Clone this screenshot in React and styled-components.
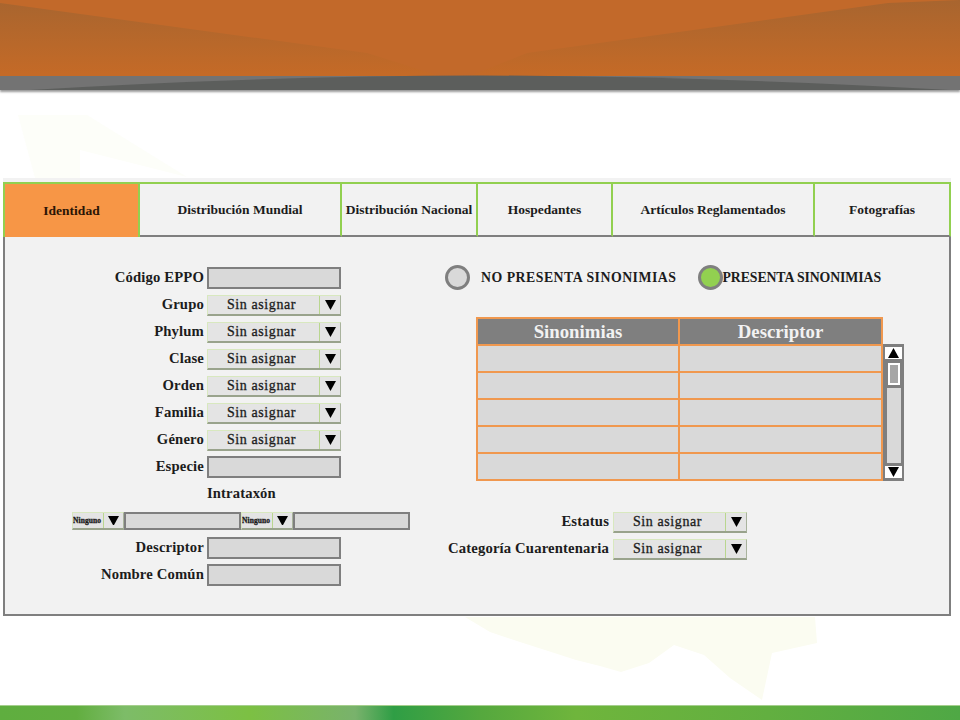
import React from "react";
import styled, { createGlobalStyle } from "styled-components";

const Global = createGlobalStyle`
  html, body { margin: 0; padding: 0; background: #fff; }
  body { font-family: "Liberation Serif", "Times New Roman", serif; color: #1c1c1c; }
`;

const Page = styled.div`
  position: relative;
  width: 960px;
  height: 720px;
  overflow: hidden;
  display: flex;
  flex-direction: column;
`;

const Watermark = styled.svg`
  position: absolute;
  inset: 0;
  width: 960px;
  height: 720px;
`;

const Header = styled.header`
  position: relative;
  height: 90px;
  flex: none;
  box-shadow: 0 2px 2px rgba(70, 70, 70, 0.55);
`;

const HeaderArt = styled.svg`
  display: block;
  width: 960px;
  height: 90px;
`;

const Panel = styled.section`
  position: relative;
  margin: 92px 0 0 3px;
  width: 948px;
  height: 434px;
  box-sizing: border-box;
  flex: none;
  background: #f2f2f2;
  border: solid #7f7f7f;
  border-width: 0 2px 2px 2px;
  box-shadow: 0 -4px 0 #f2f2f2;
`;

const Tabs = styled.nav`
  display: flex;
  height: 55px;
  margin: 0 -2px;
  box-sizing: border-box;
`;

const Tab = styled.div`
  box-sizing: border-box;
  width: ${(p) => p.$w}px;
  flex: none;
  display: flex;
  align-items: center;
  justify-content: center;
  font-size: 13.5px;
  font-weight: 700;
  white-space: nowrap;
  color: ${(p) => (p.$active ? "#2b1505" : "#1c1c1c")};
  background: ${(p) => (p.$active ? "#f79646" : "#f2f2f2")};
  border-top: 2px solid #92d050;
  border-right: 2px solid #92d050;
  border-left: ${(p) => (p.$first ? "2px solid #92d050" : "0")};
  border-bottom: ${(p) => (p.$active ? "0" : "2px solid #7f7f7f")};
`;

const Body = styled.div`
  display: flex;
  padding: 28px 0 0 55px;
`;

const LeftColumn = styled.div`
  width: 350px;
  flex: none;
  padding-top: 2px;
  display: flex;
  flex-direction: column;
  gap: 5px;
`;

const FieldRow = styled.div`
  display: grid;
  grid-template-columns: ${(p) => p.$label || 144}px 134px;
  column-gap: ${(p) => p.$gap || 3}px;
  height: 22px;
  align-items: center;

  > :last-child {
    align-self: end;
  }
`;

const Label = styled.label`
  text-align: right;
  font-size: 14.7px;
  font-weight: 700;
  white-space: nowrap;
  letter-spacing: 0.15px;
  position: relative;
  top: -1px;
`;

const TextBox = styled.div`
  box-sizing: border-box;
  width: ${(p) => p.$w || 134}px;
  height: ${(p) => p.$h || 22}px;
  background: #d9d9d9;
  border: 2px solid #7f7f7f;
  flex: none;
`;

const SelectBox = styled.div`
  box-sizing: border-box;
  width: ${(p) => p.$w || 134}px;
  height: ${(p) => p.$h || 21}px;
  flex: none;
  display: flex;
  background: #e4e4e4;
  border-top: 1px solid #d8e8bf;
  border-left: 1px solid #d8e8bf;
  border-right: 1px solid #a9b39d;
  border-bottom: 2px solid #99a38c;
`;

const SelectText = styled.span`
  flex: 1;
  min-width: 0;
  display: flex;
  align-items: center;
  justify-content: ${(p) => (p.$small ? "flex-start" : "center")};
  font-size: ${(p) => (p.$small ? 7.5 : 14)}px;
  font-weight: ${(p) => (p.$small ? 700 : 400)};
  letter-spacing: ${(p) => (p.$small ? 0.1 : 0.6)}px;
  padding-right: ${(p) => (p.$small ? 0 : 4)}px;
  border-right: 1px solid #b9d68f;
  -webkit-text-stroke: 0.3px #1c1c1c;
  white-space: nowrap;
  overflow: hidden;
`;

const ArrowCell = styled.span`
  width: ${(p) => p.$w || 20}px;
  flex: none;
  display: flex;
  align-items: center;
  justify-content: center;
`;

const Triangle = ({ up, size = 11 }) => (
  <svg width={size} height={size * 0.9} viewBox="0 0 10 9">
    <polygon points={up ? "5,0 10,9 0,9" : "0,0 10,0 5,9"} fill="#000" />
  </svg>
);

const Select = ({ text = "Sin asignar", small, ...rest }) => (
  <SelectBox {...rest}>
    <SelectText $small={small}>{text}</SelectText>
    <ArrowCell $w={small ? 19 : 20}>
      <Triangle />
    </ArrowCell>
  </SelectBox>
);

const CenterTitle = styled.div`
  height: 22px;
  padding-left: 147px;
  font-size: 14.6px;
  font-weight: 700;
  letter-spacing: 0.15px;
  line-height: 21px;
`;

const InlineRow = styled.div`
  display: flex;
  align-items: center;
  height: 22px;
  padding-left: 12px;
`;

const RightColumn = styled.div`
  margin-left: 35px;
  width: 470px;
  flex: none;
`;

const RadioRow = styled.div`
  display: flex;
  align-items: center;
  height: 25px;
`;

const RadioDot = styled.span`
  box-sizing: border-box;
  width: 25px;
  height: 25px;
  border-radius: 50%;
  border: 3px solid #7f7f7f;
  background: ${(p) => (p.$on ? "#92d050" : "#d9d9d9")};
  flex: none;
`;

const RadioText = styled.span`
  font-size: 13.8px;
  font-weight: 700;
  white-space: nowrap;
  letter-spacing: ${(p) => p.$ls || 0}px;
  margin-left: ${(p) => p.$ml}px;
  margin-right: ${(p) => p.$mr || 0}px;
`;

const TableWrap = styled.div`
  display: flex;
  margin: 27px 0 0 31px;
`;

const SynTable = styled.div`
  box-sizing: border-box;
  width: 407px;
  height: 164px;
  display: grid;
  grid-template-columns: 202px 1fr;
  grid-template-rows: repeat(6, 27px);
  border-left: 2px solid #f0984f;
  border-top: 2px solid #f0984f;
`;

const HeadCell = styled.div`
  box-sizing: border-box;
  background: #7f7f7f;
  color: #f2f2f2;
  font-size: 18.8px;
  font-weight: 700;
  text-align: center;
  line-height: 25px;
  border-right: 2px solid #f0984f;
  border-bottom: 2px solid #f0984f;
`;

const Cell = styled.div`
  box-sizing: border-box;
  background: #d9d9d9;
  border-right: 2px solid #f0984f;
  border-bottom: 2px solid #f0984f;
`;

const ScrollBar = styled.div`
  box-sizing: border-box;
  width: 21px;
  height: 137px;
  margin-top: 27px;
  background: #7f7f7f;
  padding: 3px 2px;
  display: flex;
  flex-direction: column;
  align-items: center;
`;

const ScrollButton = styled.div`
  width: 17px;
  height: 12px;
  flex: none;
  background: #fff;
  display: flex;
  align-items: center;
  justify-content: center;
`;

const ScrollThumb = styled.div`
  box-sizing: border-box;
  width: 12px;
  height: 22px;
  margin-top: 4px;
  flex: none;
  background: #a6a6a6;
  border: 2px solid #fff;
`;

const ScrollTrack = styled.div`
  width: 14px;
  flex: 1;
  margin: 3px 0;
  background: #d9d9d9;
`;

const StatusBlock = styled.div`
  margin-top: 30px;
  display: flex;
  flex-direction: column;
  gap: 5px;
`;

const Footer = styled.footer`
  margin-top: 89px;
  height: 15px;
  flex: none;
  border-top: 1px solid #a5cf8d;
  box-sizing: border-box;
  background: linear-gradient(
    90deg,
    #5fae3f 0%,
    #62ae40 8%,
    #7dbc68 13%,
    #7cc043 26%,
    #79b26c 37%,
    #2f9e45 41%,
    #55a83e 50%,
    #6fb53c 60%,
    #62af40 80%,
    #4fa845 100%
  );
`;

const tabs = [
  ["Identidad", 137],
  ["Distribución Mundial", 202],
  ["Distribución Nacional", 136],
  ["Hospedantes", 135],
  ["Artículos Reglamentados", 202],
  ["Fotografías", 136],
];

const selectRows = ["Grupo", "Phylum", "Clase", "Orden", "Familia", "Género"];

export default function App() {
  return (
    <>
      <Global />
      <Page>
        <Watermark viewBox="0 0 960 720">
          <polygon points="18,115 87,115 187,177 80,150 80,178 35,178" fill="#fdfef9" />
          <polygon
            points="465,617 490,632 520,642 545,650 576,660 600,666 621,672 649,663 674,645 704,655 730,678 762,700 772,653 817,643 815,617"
            fill="#fbfcf1"
          />
        </Watermark>
        <Header>
          <HeaderArt viewBox="0 0 960 90" preserveAspectRatio="none">
            <defs>
              <linearGradient id="wedge" gradientUnits="userSpaceOnUse" x1="0" y1="0" x2="0" y2="74">
                <stop offset="0" stopColor="#a8652f" />
                <stop offset="1" stopColor="#c46a27" />
              </linearGradient>
            </defs>
            <rect width="960" height="76" fill="#c2692a" />
            <polygon points="0,3 367,53 440,76 0,76" fill="url(#wedge)" />
            <polygon points="960,0 888,3 527,53 470,76 960,76" fill="url(#wedge)" />
            <rect y="76" width="960" height="14" fill="#737373" />
            <path d="M30,90 Q260,76 480,75.5 Q700,76 950,90 Z" fill="#5c5e5c" />
          </HeaderArt>
        </Header>
        <Panel>
          <Tabs>
            {tabs.map(([t, w], i) => (
              <Tab key={t} $w={w} $active={i === 0} $first={i === 0}>
                {t}
              </Tab>
            ))}
          </Tabs>
          <Body>
            <LeftColumn>
              <FieldRow>
                <Label>Código EPPO</Label>
                <TextBox />
              </FieldRow>
              {selectRows.map((l) => (
                <FieldRow key={l}>
                  <Label>{l}</Label>
                  <Select />
                </FieldRow>
              ))}
              <FieldRow>
                <Label>Especie</Label>
                <TextBox />
              </FieldRow>
              <CenterTitle>Intrataxón</CenterTitle>
              <InlineRow>
                <Select small text="Ninguno" $w={52} $h={18} />
                <TextBox $w={117} $h={18} />
                <Select small text="Ninguno" $w={52} $h={18} />
                <TextBox $w={117} $h={18} />
              </InlineRow>
              <FieldRow>
                <Label>Descriptor</Label>
                <TextBox />
              </FieldRow>
              <FieldRow>
                <Label>Nombre Común</Label>
                <TextBox />
              </FieldRow>
            </LeftColumn>
            <RightColumn>
              <RadioRow>
                <RadioDot />
                <RadioText $ml={11} $mr={21} $ls={0.5}>NO PRESENTA SINONIMIAS</RadioText>
                <RadioDot $on />
                <RadioText $ml={0} $ls={-0.1}>PRESENTA SINONIMIAS</RadioText>
              </RadioRow>
              <TableWrap>
                <SynTable>
                  <HeadCell>Sinonimias</HeadCell>
                  <HeadCell>Descriptor</HeadCell>
                  {Array.from({ length: 10 }).map((_, i) => (
                    <Cell key={i} />
                  ))}
                </SynTable>
                <ScrollBar>
                  <ScrollButton>
                    <Triangle up />
                  </ScrollButton>
                  <ScrollThumb />
                  <ScrollTrack />
                  <ScrollButton>
                    <Triangle />
                  </ScrollButton>
                </ScrollBar>
              </TableWrap>
              <StatusBlock>
                <FieldRow $label={164} $gap={4}>
                  <Label>Estatus</Label>
                  <Select />
                </FieldRow>
                <FieldRow $label={164} $gap={4}>
                  <Label>Categoría Cuarentenaria</Label>
                  <Select />
                </FieldRow>
              </StatusBlock>
            </RightColumn>
          </Body>
        </Panel>
        <Footer />
      </Page>
    </>
  );
}
